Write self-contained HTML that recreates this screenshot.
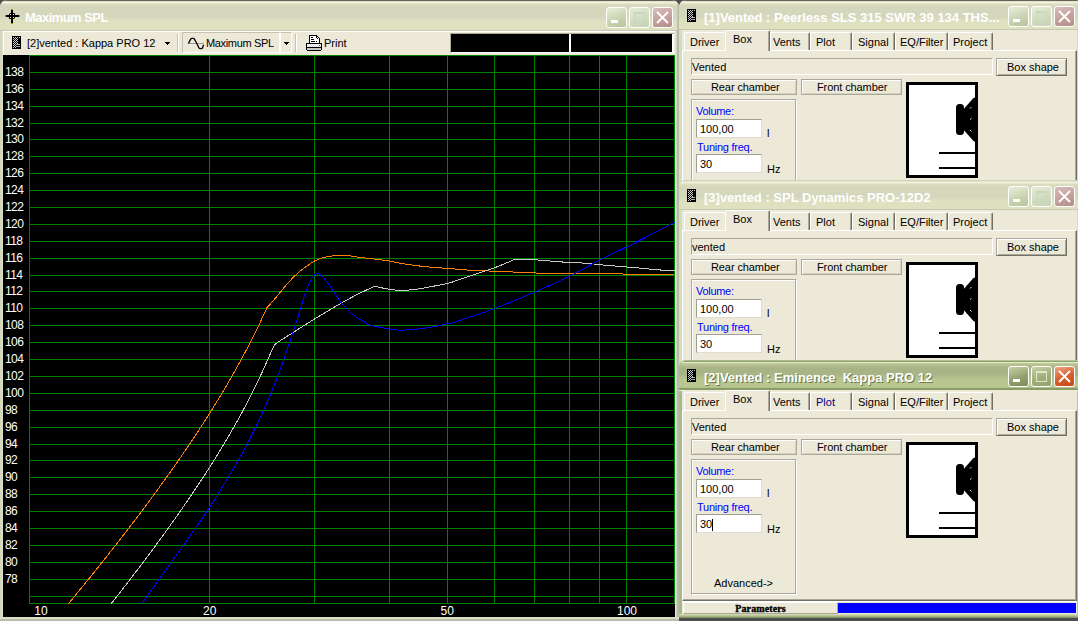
<!DOCTYPE html><html><head><meta charset="utf-8"><style>
*{margin:0;padding:0;box-sizing:border-box}
html,body{width:1078px;height:621px;overflow:hidden;background:#4e4e4e;font-family:"Liberation Sans",sans-serif;font-size:11px;color:#000}
.a{position:absolute}
.t{position:absolute;white-space:pre;line-height:13px}
.ttl{position:absolute;white-space:pre;font-weight:bold;color:#fff;line-height:16px}
.btn{position:absolute;width:21px;height:21px;border:1px solid #fff;border-radius:3px;overflow:hidden}
.pb{position:absolute;background:#ece9d8;border:1px solid #aca899;box-shadow:inset 1px 1px 0 #fff,inset -1px -1px 0 #d6d2c2}
.fld{position:absolute;background:#fff;border:1px solid;border-color:#a0a090 #e0ddd0 #e0ddd0 #a0a090}
</style></head><body><div class="a" style="left:0;top:0;width:679px;height:621px;background:linear-gradient(90deg,#d0d6bc 0,#d0d6bc 1px,#d6dac0 1px,#d6dac0 2px,#dcdec4 2px,#dcdec4 3px,#ece9d8 3px,#ece9d8 675px,#e6e6d4 675px,#e6e6d4 676px,#d0d4c0 676px,#d0d4c0 677px,#b4bca6 677px);border-radius:7px 7px 0 0"></div><div class="a" style="left:0;top:0;width:679px;height:31px;border-radius:7px 7px 0 0;background:linear-gradient(#65625a 0,#65625a 1px,#dfe2c5 1px,#dfe2c5 2px,#f1f1df 2px,#f1f1df 3px,#e6e4cb 3px,#e6e4cb 4px,#dcdcc0 4px,#d4d7bc 7px,#d4d7bc 17px,#dee0c0 21px,#dee0c0 30px,#c6c9b1 30px,#c6c9b1 31px)"></div><svg class="a" style="left:5px;top:9px" width="15" height="15" viewBox="0 0 15 15" shape-rendering="crispEdges"><rect x="6" y="1" width="2" height="13" fill="#000"/><rect x="1" y="6" width="13" height="2" fill="#000"/><rect x="6" y="0" width="2" height="1" fill="#a89400"/><rect x="6" y="14" width="2" height="1" fill="#a89400"/><rect x="0" y="6" width="1" height="2" fill="#a89400"/><rect x="14" y="6" width="1" height="2" fill="#a89400"/><rect x="4" y="4" width="6" height="6" fill="#000"/><rect x="5" y="5" width="1" height="1" fill="#fff"/><rect x="8" y="5" width="1" height="1" fill="#fff"/><rect x="5" y="8" width="1" height="1" fill="#fff"/><rect x="8" y="8" width="1" height="1" fill="#fff"/><rect x="4" y="4" width="1" height="1" fill="#a89400"/><rect x="9" y="9" width="1" height="1" fill="#a89400"/></svg><div class="ttl" style="left:25px;top:10px;font-size:13px;letter-spacing:-.55px">Maximum SPL</div><div class="btn" style="left:606px;top:7px;background:linear-gradient(160deg,#e8eed8,#cad4b2 55%,#b8c39e)"><div class="a" style="left:4px;top:12px;width:7px;height:3px;background:#fff"></div></div><div class="btn" style="left:629px;top:7px;background:linear-gradient(160deg,#e4ecd8,#d0dac0 60%,#c8d2b6)"><div class="a" style="left:4px;top:4px;width:11px;height:11px;border:1px solid rgba(200,214,184,.9);border-top-width:2px"></div></div><div class="btn" style="left:652px;top:7px;background:linear-gradient(160deg,#d8bcc0,#c4a09c 55%,#b48c88)"><svg class="a" style="left:3px;top:3px" width="13" height="13"><path d="M1 1L12 12M12 1L1 12" stroke="#fff" stroke-width="1.9"/></svg></div><div class="a" style="left:677px;top:4px;width:2px;height:27px;background:linear-gradient(90deg,#c4c8b0,#b4bca6)"></div><div class="a" style="left:3px;top:31px;width:672px;height:24px;background:#ece9d8;border-top:1px solid #fff;border-left:1px solid #fff"></div><svg class="a" style="left:12px;top:36px" width="9" height="13" shape-rendering="crispEdges"><rect x="0" y="0" width="9" height="13" fill="#000"/><rect x="1" y="1" width="1" height="1" fill="#d0d0d0"/><rect x="3" y="1" width="1" height="1" fill="#d0d0d0"/><rect x="5" y="1" width="1" height="1" fill="#d0d0d0"/><rect x="7" y="1" width="1" height="1" fill="#d0d0d0"/><rect x="2" y="2" width="1" height="1" fill="#d0d0d0"/><rect x="4" y="2" width="1" height="1" fill="#d0d0d0"/><rect x="1" y="3" width="1" height="1" fill="#d0d0d0"/><rect x="3" y="3" width="1" height="1" fill="#d0d0d0"/><rect x="5" y="3" width="1" height="1" fill="#d0d0d0"/><rect x="2" y="4" width="1" height="1" fill="#d0d0d0"/><rect x="4" y="4" width="1" height="1" fill="#d0d0d0"/><rect x="1" y="5" width="1" height="1" fill="#d0d0d0"/><rect x="3" y="5" width="1" height="1" fill="#d0d0d0"/><rect x="5" y="5" width="1" height="1" fill="#d0d0d0"/><rect x="2" y="6" width="1" height="1" fill="#d0d0d0"/><rect x="4" y="6" width="1" height="1" fill="#d0d0d0"/><rect x="1" y="7" width="1" height="1" fill="#d0d0d0"/><rect x="3" y="7" width="1" height="1" fill="#d0d0d0"/><rect x="5" y="7" width="1" height="1" fill="#d0d0d0"/><rect x="2" y="8" width="1" height="1" fill="#d0d0d0"/><rect x="4" y="8" width="1" height="1" fill="#d0d0d0"/><rect x="1" y="9" width="1" height="1" fill="#d0d0d0"/><rect x="3" y="9" width="1" height="1" fill="#d0d0d0"/><rect x="2" y="10" width="1" height="1" fill="#d0d0d0"/><rect x="1" y="11" width="1" height="1" fill="#d0d0d0"/><rect x="3" y="11" width="1" height="1" fill="#d0d0d0"/><rect x="4" y="8" width="4" height="1" fill="#b0b0b0"/><rect x="4" y="10" width="4" height="1" fill="#b0b0b0"/></svg><div class="t" style="left:27px;top:37px">[2]vented : Kappa PRO 12</div><svg class="a" style="left:165px;top:42px" width="5" height="3" shape-rendering="crispEdges"><rect x="0" y="0" width="5" height="1"/><rect x="1" y="1" width="3" height="1"/><rect x="2" y="2" width="1" height="1"/></svg><div class="a" style="left:177px;top:34px;width:2px;height:18px;border-left:1px solid #c5c2b2;border-right:1px solid #fff"></div><div class="a" style="left:182px;top:32px;width:98px;height:21px;border:1px solid #c5c2b2;border-right-color:#fff;border-bottom-color:#fff"></div><div class="a" style="left:280px;top:32px;width:12px;height:21px;border:1px solid #c5c2b2;border-left-color:#fff;border-right-color:#fff;border-bottom-color:#fff"></div><svg class="a" style="left:187px;top:37px" width="18" height="13"><path d="M2 6.5H17" stroke="#9a9a9a" stroke-width="1"/><path d="M1.4 6.6L3.6 2.2Q4.2 1.4 5 1.4H6.2Q7 1.4 7.6 2.4L10.3 7.5L11.8 10.6Q12.4 11.6 13.2 11.6H14.4Q15.2 11.6 15.7 10.6L16.6 7.8" stroke="#000" stroke-width="1.3" fill="none"/></svg><div class="t" style="left:206px;top:37px;letter-spacing:-.35px">Maximum SPL</div><svg class="a" style="left:284px;top:42px" width="5" height="3" shape-rendering="crispEdges"><rect x="0" y="0" width="5" height="1"/><rect x="1" y="1" width="3" height="1"/><rect x="2" y="2" width="1" height="1"/></svg><div class="a" style="left:295px;top:34px;width:2px;height:18px;border-left:1px solid #c5c2b2;border-right:1px solid #fff"></div><svg class="a" style="left:306px;top:35px" width="16" height="16" shape-rendering="crispEdges"><rect x="4" y="1" width="7" height="8" fill="#fff"/><rect x="11" y="2" width="1" height="7" fill="#fff"/><rect x="12" y="3" width="1" height="6" fill="#fff"/><rect x="3" y="0" width="8" height="1" fill="#000"/><rect x="11" y="1" width="1" height="1" fill="#000"/><rect x="12" y="2" width="1" height="1" fill="#000"/><rect x="13" y="3" width="1" height="6" fill="#000"/><rect x="3" y="0" width="1" height="9" fill="#000"/><rect x="10" y="1" width="1" height="2" fill="#000"/><rect x="11" y="3" width="1" height="1" fill="#000"/><rect x="5" y="2" width="2" height="1" fill="#000"/><rect x="5" y="4" width="3" height="1" fill="#000"/><rect x="5" y="6" width="4" height="1" fill="#000"/><rect x="10" y="6" width="1" height="1" fill="#000"/><rect x="0" y="8" width="16" height="1" fill="#000"/><rect x="0" y="8" width="1" height="7" fill="#000"/><rect x="15" y="8" width="1" height="7" fill="#000"/><rect x="1" y="9" width="14" height="1" fill="#d8d8d8"/><rect x="1" y="9" width="1" height="1" fill="#fff"/><rect x="3" y="9" width="1" height="1" fill="#fff"/><rect x="5" y="9" width="1" height="1" fill="#fff"/><rect x="7" y="9" width="1" height="1" fill="#fff"/><rect x="9" y="9" width="1" height="1" fill="#fff"/><rect x="11" y="9" width="1" height="1" fill="#fff"/><rect x="13" y="9" width="1" height="1" fill="#fff"/><rect x="1" y="10" width="14" height="1" fill="#d8d8d8"/><rect x="2" y="10" width="1" height="1" fill="#fff"/><rect x="4" y="10" width="1" height="1" fill="#fff"/><rect x="6" y="10" width="1" height="1" fill="#fff"/><rect x="8" y="10" width="1" height="1" fill="#fff"/><rect x="10" y="10" width="1" height="1" fill="#fff"/><rect x="12" y="10" width="1" height="1" fill="#fff"/><rect x="14" y="10" width="1" height="1" fill="#fff"/><rect x="1" y="11" width="14" height="1" fill="#d8d8d8"/><rect x="1" y="11" width="1" height="1" fill="#fff"/><rect x="3" y="11" width="1" height="1" fill="#fff"/><rect x="5" y="11" width="1" height="1" fill="#fff"/><rect x="7" y="11" width="1" height="1" fill="#fff"/><rect x="9" y="11" width="1" height="1" fill="#fff"/><rect x="11" y="11" width="1" height="1" fill="#fff"/><rect x="13" y="11" width="1" height="1" fill="#fff"/><rect x="13" y="10" width="1" height="1" fill="#ff0000"/><rect x="0" y="12" width="16" height="1" fill="#000"/><rect x="1" y="13" width="14" height="2" fill="#c8c8c8"/><rect x="1" y="15" width="14" height="1" fill="#000"/></svg><div class="t" style="left:324px;top:37px">Print</div><div class="a" style="left:450px;top:33px;width:224px;height:20px;background:#fff;border-top:1px solid #aca899;border-left:1px solid #aca899"></div><div class="a" style="left:451px;top:34px;width:118px;height:18px;background:#000"></div><div class="a" style="left:571px;top:34px;width:101px;height:18px;background:#000"></div><div class="a" style="left:3px;top:55px;width:672px;height:562px;background:#000"></div><div class="a" style="left:0;top:617px;width:679px;height:4px;background:linear-gradient(#dcdec6 0,#dcdec6 2px,#b9bca8 2px)"></div><svg class="a" style="left:0;top:0" width="1078" height="621"><defs><clipPath id="cp"><rect x="29" y="55" width="646" height="549"/></clipPath></defs><g fill="#008000" shape-rendering="crispEdges"><rect x="29" y="55" width="646" height="1"/><rect x="29" y="72" width="646" height="1"/><rect x="29" y="89" width="646" height="1"/><rect x="29" y="106" width="646" height="1"/><rect x="29" y="123" width="646" height="1"/><rect x="29" y="139" width="646" height="1"/><rect x="29" y="156" width="646" height="1"/><rect x="29" y="173" width="646" height="1"/><rect x="29" y="190" width="646" height="1"/><rect x="29" y="207" width="646" height="1"/><rect x="29" y="224" width="646" height="1"/><rect x="29" y="241" width="646" height="1"/><rect x="29" y="258" width="646" height="1"/><rect x="29" y="275" width="646" height="1"/><rect x="29" y="291" width="646" height="1"/><rect x="29" y="308" width="646" height="1"/><rect x="29" y="325" width="646" height="1"/><rect x="29" y="342" width="646" height="1"/><rect x="29" y="359" width="646" height="1"/><rect x="29" y="376" width="646" height="1"/><rect x="29" y="393" width="646" height="1"/><rect x="29" y="410" width="646" height="1"/><rect x="29" y="427" width="646" height="1"/><rect x="29" y="444" width="646" height="1"/><rect x="29" y="460" width="646" height="1"/><rect x="29" y="477" width="646" height="1"/><rect x="29" y="494" width="646" height="1"/><rect x="29" y="511" width="646" height="1"/><rect x="29" y="528" width="646" height="1"/><rect x="29" y="545" width="646" height="1"/><rect x="29" y="562" width="646" height="1"/><rect x="29" y="579" width="646" height="1"/><rect x="29" y="596" width="646" height="1"/><rect x="29" y="603" width="646" height="1"/><rect x="29" y="55" width="1" height="549"/><rect x="209" y="55" width="1" height="549"/><rect x="314" y="55" width="1" height="549"/><rect x="389" y="55" width="1" height="549"/><rect x="447" y="55" width="1" height="549"/><rect x="494" y="55" width="1" height="549"/><rect x="534" y="55" width="1" height="549"/><rect x="569" y="55" width="1" height="549"/><rect x="599" y="55" width="1" height="549"/><rect x="626" y="55" width="1" height="549"/><rect x="674" y="55" width="1" height="549"/></g><g clip-path="url(#cp)" shape-rendering="crispEdges"><path fill="none" stroke="#ff8000" stroke-width="1" d="M68.59,603.60 C69.57,602.40 71.21,600.43 74.51,596.40 C77.81,592.37 83.79,585.05 88.37,579.40 C92.94,573.75 97.44,568.15 101.94,562.50 C106.45,556.85 110.93,551.18 115.38,545.50 C119.83,539.82 124.27,534.10 128.64,528.40 C133.02,522.70 137.38,516.97 141.63,511.30 C145.89,505.63 150.05,500.03 154.18,494.40 C158.31,488.77 162.39,483.13 166.41,477.50 C170.43,471.87 174.48,466.12 178.31,460.60 C182.14,455.08 185.66,449.93 189.38,444.40 C193.10,438.87 196.95,433.05 200.62,427.40 C204.29,421.75 207.84,416.18 211.39,410.50 C214.94,404.82 218.86,398.38 221.92,393.30 C224.98,388.22 226.48,385.72 229.74,380.00 C233.01,374.28 238.20,365.03 241.50,359.00 C244.80,352.97 246.67,349.40 249.54,343.80 C252.41,338.20 255.81,331.42 258.71,325.40 C261.61,319.38 265.56,310.65 266.93,307.70"/><path fill="none" stroke="#ff8000" stroke-width="1" d="M266.93,307.70 C267.93,306.62 270.57,303.90 272.90,301.20 C275.23,298.50 278.35,294.58 280.90,291.50 C283.45,288.42 285.52,285.65 288.20,282.70 C290.88,279.75 294.18,276.35 297.00,273.80 C299.82,271.25 302.13,269.55 305.10,267.40 C308.07,265.25 311.58,262.57 314.80,260.90 C318.02,259.23 320.92,258.28 324.40,257.40 C327.88,256.52 331.93,255.90 335.70,255.60 C339.47,255.30 342.97,255.30 347.00,255.60 C351.03,255.90 356.07,256.92 359.90,257.40 C363.73,257.88 367.05,258.15 370.00,258.50 C372.95,258.85 374.37,259.07 377.60,259.50 C380.83,259.93 385.57,260.47 389.40,261.10 C393.23,261.73 396.18,262.55 400.60,263.30 C405.02,264.05 410.80,264.95 415.90,265.60 C421.00,266.25 425.93,266.73 431.20,267.20 C436.47,267.67 442.42,268.02 447.50,268.40 C452.58,268.78 457.95,269.20 461.70,269.50 C465.45,269.80 461.83,269.80 470.00,270.20 C478.17,270.60 498.35,271.38 510.70,271.90 C523.05,272.42 534.22,273.02 544.10,273.30 C553.98,273.58 561.35,273.52 570.00,273.60 C578.65,273.68 578.58,273.67 596.00,273.80 C613.42,273.93 661.42,274.30 674.50,274.40"/><path fill="none" stroke="#c8c8c8" stroke-width="1" d="M111.26,603.60 C112.20,602.40 113.77,600.43 116.91,596.40 C120.05,592.37 125.76,585.05 130.11,579.40 C134.45,573.75 138.72,568.15 142.98,562.50 C147.24,556.85 151.50,551.15 155.66,545.50 C159.83,539.85 163.88,534.30 167.97,528.60 C172.07,522.90 176.25,517.00 180.23,511.30 C184.20,505.60 188.03,500.03 191.83,494.40 C195.64,488.77 199.38,483.13 203.05,477.50 C206.71,471.87 210.39,466.12 213.84,460.60 C217.29,455.08 220.44,449.93 223.75,444.40 C227.06,438.87 230.46,433.05 233.68,427.40 C236.89,421.75 239.98,416.18 243.03,410.50 C246.08,404.82 249.11,399.00 251.98,393.30 C254.85,387.60 257.59,381.97 260.24,376.30 C262.89,370.63 265.62,364.28 267.88,359.30 C270.14,354.32 272.28,349.13 273.80,346.40 C275.32,343.67 273.88,345.15 277.00,342.90 C280.12,340.65 286.20,336.90 292.50,332.90 C298.80,328.90 306.80,323.78 314.80,318.90 C322.80,314.02 333.53,307.62 340.50,303.60 C347.47,299.58 350.93,297.68 356.60,294.80 C362.27,291.92 371.52,287.72 374.50,286.30"/><path fill="none" stroke="#c8c8c8" stroke-width="1" d="M374.50,286.30 C376.98,286.80 384.80,288.62 389.40,289.30 C394.00,289.98 397.68,290.40 402.10,290.40 C406.52,290.40 411.05,289.93 415.90,289.30 C420.75,288.67 425.93,287.57 431.20,286.60 C436.47,285.63 442.70,284.70 447.50,283.50 C452.30,282.30 456.25,280.65 460.00,279.40 C463.75,278.15 464.25,277.93 470.00,276.00 C475.75,274.07 486.98,270.58 494.50,267.80 C502.02,265.02 511.67,260.72 515.10,259.30"/><path fill="none" stroke="#c8c8c8" stroke-width="1" d="M515.10,259.30 C518.72,259.40 530.28,259.55 536.80,259.90 C543.32,260.25 548.67,260.97 554.20,261.40 C559.73,261.83 565.38,262.23 570.00,262.50 C574.62,262.77 577.77,262.73 581.90,263.00 C586.03,263.27 590.62,263.70 594.80,264.10 C598.98,264.50 602.93,265.03 607.00,265.40 C611.07,265.77 615.23,265.98 619.20,266.30 C623.17,266.62 626.93,266.97 630.80,267.30 C634.67,267.63 638.53,267.93 642.40,268.30 C646.27,268.67 650.13,269.17 654.00,269.50 C657.87,269.83 662.18,270.17 665.60,270.30 C669.02,270.43 673.02,270.30 674.50,270.30"/><path fill="none" stroke="#0000ff" stroke-width="1" d="M141.79,603.60 C142.64,602.40 144.00,600.43 146.87,596.40 C149.74,592.37 154.94,585.10 159.02,579.40 C163.11,573.70 167.31,567.90 171.39,562.20 C175.48,556.50 179.57,550.80 183.52,545.20 C187.48,539.60 190.98,534.65 195.13,528.60 C199.28,522.55 204.32,515.13 208.45,508.90 C212.57,502.67 214.86,499.35 219.86,491.20 C224.87,483.05 233.95,467.80 238.46,460.00 C242.98,452.20 244.11,449.83 246.96,444.40 C249.81,438.97 253.40,431.80 255.58,427.40 C257.77,423.00 257.98,422.57 260.07,418.00 C262.16,413.43 266.31,404.10 268.11,400.00 C269.91,395.90 269.29,397.35 270.89,393.40 C272.48,389.45 275.51,381.98 277.68,376.30 C279.85,370.62 281.92,364.93 283.92,359.30 C285.92,353.67 287.79,348.15 289.67,342.50 C291.55,336.85 294.01,329.15 295.22,325.40 C296.43,321.65 296.16,322.42 296.92,320.00 C297.68,317.58 298.38,315.37 299.78,310.90 C301.18,306.43 303.63,298.03 305.32,293.20 C307.00,288.37 308.32,285.00 309.90,281.90 C311.48,278.80 313.58,275.90 314.80,274.60 C316.02,273.30 316.40,274.15 317.20,274.10 C318.00,274.05 318.40,273.53 319.60,274.30 C320.80,275.07 322.25,276.10 324.40,278.70 C326.55,281.30 329.82,286.02 332.50,289.90 C335.18,293.78 337.82,298.50 340.50,302.00 C343.18,305.50 345.92,308.35 348.60,310.90 C351.28,313.45 353.65,315.28 356.60,317.30 C359.55,319.32 364.07,321.72 366.30,323.00 C368.53,324.28 366.15,323.98 370.00,325.00 C373.85,326.02 384.05,328.23 389.40,329.10 C394.75,329.97 397.68,330.20 402.10,330.20 C406.52,330.20 411.05,329.62 415.90,329.10 C420.75,328.58 425.93,328.00 431.20,327.10 C436.47,326.20 442.70,324.82 447.50,323.70 C452.30,322.58 452.17,322.95 460.00,320.40 C467.83,317.85 482.07,313.10 494.50,308.40 C506.93,303.70 522.02,297.62 534.60,292.20 C547.18,286.78 559.18,281.23 570.00,275.90 C580.82,270.57 589.95,265.07 599.50,260.20 C609.05,255.33 618.87,250.88 627.30,246.70 C635.73,242.52 642.23,239.18 650.10,235.10 C657.97,231.02 670.43,224.35 674.50,222.20"/></g></svg><div class="t" style="left:5px;top:65px;color:#fff;font-size:12px;line-height:14px;letter-spacing:-.6px">138</div><div class="t" style="left:5px;top:82px;color:#fff;font-size:12px;line-height:14px;letter-spacing:-.6px">136</div><div class="t" style="left:5px;top:99px;color:#fff;font-size:12px;line-height:14px;letter-spacing:-.6px">134</div><div class="t" style="left:5px;top:116px;color:#fff;font-size:12px;line-height:14px;letter-spacing:-.6px">132</div><div class="t" style="left:5px;top:132px;color:#fff;font-size:12px;line-height:14px;letter-spacing:-.6px">130</div><div class="t" style="left:5px;top:149px;color:#fff;font-size:12px;line-height:14px;letter-spacing:-.6px">128</div><div class="t" style="left:5px;top:166px;color:#fff;font-size:12px;line-height:14px;letter-spacing:-.6px">126</div><div class="t" style="left:5px;top:183px;color:#fff;font-size:12px;line-height:14px;letter-spacing:-.6px">124</div><div class="t" style="left:5px;top:200px;color:#fff;font-size:12px;line-height:14px;letter-spacing:-.6px">122</div><div class="t" style="left:5px;top:217px;color:#fff;font-size:12px;line-height:14px;letter-spacing:-.6px">120</div><div class="t" style="left:5px;top:234px;color:#fff;font-size:12px;line-height:14px;letter-spacing:-.6px">118</div><div class="t" style="left:5px;top:251px;color:#fff;font-size:12px;line-height:14px;letter-spacing:-.6px">116</div><div class="t" style="left:5px;top:268px;color:#fff;font-size:12px;line-height:14px;letter-spacing:-.6px">114</div><div class="t" style="left:5px;top:284px;color:#fff;font-size:12px;line-height:14px;letter-spacing:-.6px">112</div><div class="t" style="left:5px;top:301px;color:#fff;font-size:12px;line-height:14px;letter-spacing:-.6px">110</div><div class="t" style="left:5px;top:318px;color:#fff;font-size:12px;line-height:14px;letter-spacing:-.6px">108</div><div class="t" style="left:5px;top:335px;color:#fff;font-size:12px;line-height:14px;letter-spacing:-.6px">106</div><div class="t" style="left:5px;top:352px;color:#fff;font-size:12px;line-height:14px;letter-spacing:-.6px">104</div><div class="t" style="left:5px;top:369px;color:#fff;font-size:12px;line-height:14px;letter-spacing:-.6px">102</div><div class="t" style="left:5px;top:386px;color:#fff;font-size:12px;line-height:14px;letter-spacing:-.6px">100</div><div class="t" style="left:5px;top:403px;color:#fff;font-size:12px;line-height:14px;letter-spacing:-.6px">98</div><div class="t" style="left:5px;top:420px;color:#fff;font-size:12px;line-height:14px;letter-spacing:-.6px">96</div><div class="t" style="left:5px;top:437px;color:#fff;font-size:12px;line-height:14px;letter-spacing:-.6px">94</div><div class="t" style="left:5px;top:453px;color:#fff;font-size:12px;line-height:14px;letter-spacing:-.6px">92</div><div class="t" style="left:5px;top:470px;color:#fff;font-size:12px;line-height:14px;letter-spacing:-.6px">90</div><div class="t" style="left:5px;top:487px;color:#fff;font-size:12px;line-height:14px;letter-spacing:-.6px">88</div><div class="t" style="left:5px;top:504px;color:#fff;font-size:12px;line-height:14px;letter-spacing:-.6px">86</div><div class="t" style="left:5px;top:521px;color:#fff;font-size:12px;line-height:14px;letter-spacing:-.6px">84</div><div class="t" style="left:5px;top:538px;color:#fff;font-size:12px;line-height:14px;letter-spacing:-.6px">82</div><div class="t" style="left:5px;top:555px;color:#fff;font-size:12px;line-height:14px;letter-spacing:-.6px">80</div><div class="t" style="left:5px;top:572px;color:#fff;font-size:12px;line-height:14px;letter-spacing:-.6px">78</div><div class="t" style="left:0.9px;width:80px;text-align:center;top:604px;color:#fff;font-size:12px;line-height:14px">10</div><div class="t" style="left:169.7px;width:80px;text-align:center;top:604px;color:#fff;font-size:12px;line-height:14px">20</div><div class="t" style="left:407.3px;width:80px;text-align:center;top:604px;color:#fff;font-size:12px;line-height:14px">50</div><div class="t" style="left:587.0px;width:80px;text-align:center;top:604px;color:#fff;font-size:12px;line-height:14px">100</div><div class="a" style="left:679px;top:0px;width:399px;height:196px;background:#d6dcc0;border-radius:7px 2px 0 0"></div><div class="a" style="left:679px;top:0px;width:399px;height:30px;border-radius:7px 2px 0 0;background:linear-gradient(#65625a 0,#65625a 1px,#dfe2c5 1px,#dfe2c5 2px,#f1f1df 2px,#f1f1df 3px,#e6e4cb 3px,#e6e4cb 4px,#dcdcc0 4px,#d4d7bc 7px,#d4d7bc 17px,#dee0c0 21px,#dee0c0 29px,#c6c9b1 29px,#c6c9b1 30px)"></div><svg class="a" style="left:687px;top:9px" width="9" height="13" shape-rendering="crispEdges"><rect x="0" y="0" width="9" height="13" fill="#000"/><rect x="1" y="1" width="1" height="1" fill="#d0d0d0"/><rect x="3" y="1" width="1" height="1" fill="#d0d0d0"/><rect x="5" y="1" width="1" height="1" fill="#d0d0d0"/><rect x="7" y="1" width="1" height="1" fill="#d0d0d0"/><rect x="2" y="2" width="1" height="1" fill="#d0d0d0"/><rect x="4" y="2" width="1" height="1" fill="#d0d0d0"/><rect x="1" y="3" width="1" height="1" fill="#d0d0d0"/><rect x="3" y="3" width="1" height="1" fill="#d0d0d0"/><rect x="5" y="3" width="1" height="1" fill="#d0d0d0"/><rect x="2" y="4" width="1" height="1" fill="#d0d0d0"/><rect x="4" y="4" width="1" height="1" fill="#d0d0d0"/><rect x="1" y="5" width="1" height="1" fill="#d0d0d0"/><rect x="3" y="5" width="1" height="1" fill="#d0d0d0"/><rect x="5" y="5" width="1" height="1" fill="#d0d0d0"/><rect x="2" y="6" width="1" height="1" fill="#d0d0d0"/><rect x="4" y="6" width="1" height="1" fill="#d0d0d0"/><rect x="1" y="7" width="1" height="1" fill="#d0d0d0"/><rect x="3" y="7" width="1" height="1" fill="#d0d0d0"/><rect x="5" y="7" width="1" height="1" fill="#d0d0d0"/><rect x="2" y="8" width="1" height="1" fill="#d0d0d0"/><rect x="4" y="8" width="1" height="1" fill="#d0d0d0"/><rect x="1" y="9" width="1" height="1" fill="#d0d0d0"/><rect x="3" y="9" width="1" height="1" fill="#d0d0d0"/><rect x="2" y="10" width="1" height="1" fill="#d0d0d0"/><rect x="1" y="11" width="1" height="1" fill="#d0d0d0"/><rect x="3" y="11" width="1" height="1" fill="#d0d0d0"/><rect x="4" y="8" width="4" height="1" fill="#b0b0b0"/><rect x="4" y="10" width="4" height="1" fill="#b0b0b0"/></svg><div class="ttl" style="left:704px;top:10px;font-size:13px;">[1]Vented : Peerless SLS 315 SWR 39 134 THS...</div><div class="btn" style="left:1008px;top:6px;background:linear-gradient(160deg,#e8eed8,#cad4b2 55%,#b8c39e)"><div class="a" style="left:4px;top:12px;width:7px;height:3px;background:#fff"></div></div><div class="btn" style="left:1031px;top:6px;background:linear-gradient(160deg,#e4ecd8,#d0dac0 60%,#c8d2b6)"><div class="a" style="left:4px;top:4px;width:11px;height:11px;border:1px solid rgba(200,214,184,.9);border-top-width:2px"></div></div><div class="btn" style="left:1054px;top:6px;background:linear-gradient(160deg,#d8bcc0,#c4a09c 55%,#b48c88)"><svg class="a" style="left:3px;top:3px" width="13" height="13"><path d="M1 1L12 12M12 1L1 12" stroke="#fff" stroke-width="1.9"/></svg></div><div class="a" style="left:682px;top:30px;width:395px;height:161px;background:#ece9d8"></div><div class="a" style="left:682px;top:50px;width:395px;height:131px;border-top:1px solid #fff;border-left:1px solid #fff;border-right:1px solid #716f64;box-shadow:inset -1px 0 0 #aca899;"></div><div class="a" style="left:684px;top:32px;width:41px;height:18px;background:#ece9d8;border-top:1px solid #fff;border-left:1px solid #fff;border-radius:2px 2px 0 0"></div><div class="t" style="left:690px;top:36px;color:#000">Driver</div><div class="a" style="left:725px;top:30px;width:45px;height:21px;background:#ece9d8;border-top:1px solid #fff;border-left:1px solid #fff;border-right:1px solid #716f64;box-shadow:inset -1px 0 0 #aca899;border-radius:2px 2px 0 0"></div><div class="t" style="left:733px;top:33px;color:#000">Box</div><div class="a" style="left:770px;top:32px;width:40px;height:18px;background:#ece9d8;border-top:1px solid #fff;border-left:1px solid #fff;border-right:1px solid #716f64;box-shadow:inset -1px 0 0 #aca899;border-radius:2px 2px 0 0"></div><div class="t" style="left:773px;top:36px;color:#000">Vents</div><div class="a" style="left:810px;top:32px;width:42px;height:18px;background:#ece9d8;border-top:1px solid #fff;border-left:1px solid #fff;border-right:1px solid #716f64;box-shadow:inset -1px 0 0 #aca899;border-radius:2px 2px 0 0"></div><div class="t" style="left:816px;top:36px;color:#000">Plot</div><div class="a" style="left:852px;top:32px;width:43px;height:18px;background:#ece9d8;border-top:1px solid #fff;border-left:1px solid #fff;border-right:1px solid #716f64;box-shadow:inset -1px 0 0 #aca899;border-radius:2px 2px 0 0"></div><div class="t" style="left:858px;top:36px;color:#000">Signal</div><div class="a" style="left:895px;top:32px;width:53px;height:18px;background:#ece9d8;border-top:1px solid #fff;border-left:1px solid #fff;border-right:1px solid #716f64;box-shadow:inset -1px 0 0 #aca899;border-radius:2px 2px 0 0"></div><div class="t" style="left:900px;top:36px;color:#000">EQ/Filter</div><div class="a" style="left:948px;top:32px;width:45px;height:18px;background:#ece9d8;border-top:1px solid #fff;border-left:1px solid #fff;border-right:1px solid #716f64;box-shadow:inset -1px 0 0 #aca899;border-radius:2px 2px 0 0"></div><div class="t" style="left:953px;top:36px;color:#000">Project</div><div class="a" style="left:691px;top:58px;width:302px;height:17px;border-top:1px solid #aca899;border-left:1px solid #aca899;border-bottom:1px solid #fff;border-right:1px solid #fff"></div><div class="t" style="left:692px;top:61px">Vented</div><div class="a" style="left:996px;top:58px;width:71px;height:18px;background:#ece9d8;border:1px solid;border-color:#aca899 #716f64 #716f64 #aca899;box-shadow:inset 1px 1px 0 #fff,inset -1px -1px 0 #aca899"></div><div class="t" style="left:1007px;top:61px">Box shape</div><div class="pb" style="left:691px;top:79px;width:106px;height:16px"></div><div class="t" style="left:711px;top:81px;letter-spacing:-.1px">Rear chamber</div><div class="pb" style="left:801px;top:79px;width:101px;height:16px"></div><div class="t" style="left:817px;top:81px;letter-spacing:-.1px">Front chamber</div><div class="a" style="left:691px;top:99px;width:106px;height:90px;border:1px solid #aca899;border-right-color:#fff;border-bottom-color:#fff;box-shadow:inset -1px -1px 0 #aca899,inset 1px 1px 0 #fff"></div><div class="t" style="left:696px;top:105px;color:#0000ff;letter-spacing:-.3px">Volume:</div><div class="fld" style="left:696px;top:119px;width:66px;height:19px"></div><div class="t" style="left:700px;top:123px">100,00</div><div class="t" style="left:767px;top:127px">l</div><div class="t" style="left:697px;top:141px;color:#0000ff;letter-spacing:-.25px">Tuning freq.</div><div class="fld" style="left:696px;top:154px;width:66px;height:19px"></div><div class="t" style="left:700px;top:158px">30</div><div class="t" style="left:767px;top:163px">Hz</div><svg class="a" style="left:906px;top:82px" width="72" height="96" shape-rendering="crispEdges"><rect x="1.5" y="1.5" width="69" height="93" fill="#fff" stroke="#000" stroke-width="3"/><rect x="33" y="70" width="36" height="2" fill="#000"/><rect x="33" y="85" width="36" height="2" fill="#000"/></svg><svg class="a" style="left:906px;top:82px" width="72" height="96"><rect x="50" y="22" width="8" height="31" rx="3.5" fill="#000"/><path d="M56 29 L67 16.5 Q69 15 70 15 L70 60 Q69 60 67 58.5 L56 46 Z" fill="#000"/><path d="M64 26.5l1.5-1.5M64 37.5l1.5-1M64 48l1.5 1.5" stroke="#ddd" stroke-width="1"/></svg><div class="a" style="left:679px;top:180px;width:399px;height:196px;background:#d6dcc0;border-radius:7px 2px 0 0"></div><div class="a" style="left:679px;top:180px;width:399px;height:30px;border-radius:7px 2px 0 0;background:linear-gradient(#d2d6ba 0,#d2d6ba 1px,#dfe2c5 1px,#dfe2c5 2px,#f1f1df 2px,#f1f1df 3px,#e6e4cb 3px,#e6e4cb 4px,#dcdcc0 4px,#d4d7bc 7px,#d4d7bc 17px,#dee0c0 21px,#dee0c0 29px,#c6c9b1 29px,#c6c9b1 30px)"></div><svg class="a" style="left:687px;top:189px" width="9" height="13" shape-rendering="crispEdges"><rect x="0" y="0" width="9" height="13" fill="#000"/><rect x="1" y="1" width="1" height="1" fill="#d0d0d0"/><rect x="3" y="1" width="1" height="1" fill="#d0d0d0"/><rect x="5" y="1" width="1" height="1" fill="#d0d0d0"/><rect x="7" y="1" width="1" height="1" fill="#d0d0d0"/><rect x="2" y="2" width="1" height="1" fill="#d0d0d0"/><rect x="4" y="2" width="1" height="1" fill="#d0d0d0"/><rect x="1" y="3" width="1" height="1" fill="#d0d0d0"/><rect x="3" y="3" width="1" height="1" fill="#d0d0d0"/><rect x="5" y="3" width="1" height="1" fill="#d0d0d0"/><rect x="2" y="4" width="1" height="1" fill="#d0d0d0"/><rect x="4" y="4" width="1" height="1" fill="#d0d0d0"/><rect x="1" y="5" width="1" height="1" fill="#d0d0d0"/><rect x="3" y="5" width="1" height="1" fill="#d0d0d0"/><rect x="5" y="5" width="1" height="1" fill="#d0d0d0"/><rect x="2" y="6" width="1" height="1" fill="#d0d0d0"/><rect x="4" y="6" width="1" height="1" fill="#d0d0d0"/><rect x="1" y="7" width="1" height="1" fill="#d0d0d0"/><rect x="3" y="7" width="1" height="1" fill="#d0d0d0"/><rect x="5" y="7" width="1" height="1" fill="#d0d0d0"/><rect x="2" y="8" width="1" height="1" fill="#d0d0d0"/><rect x="4" y="8" width="1" height="1" fill="#d0d0d0"/><rect x="1" y="9" width="1" height="1" fill="#d0d0d0"/><rect x="3" y="9" width="1" height="1" fill="#d0d0d0"/><rect x="2" y="10" width="1" height="1" fill="#d0d0d0"/><rect x="1" y="11" width="1" height="1" fill="#d0d0d0"/><rect x="3" y="11" width="1" height="1" fill="#d0d0d0"/><rect x="4" y="8" width="4" height="1" fill="#b0b0b0"/><rect x="4" y="10" width="4" height="1" fill="#b0b0b0"/></svg><div class="ttl" style="left:704px;top:190px;font-size:13px;">[3]vented : SPL Dynamics PRO-12D2</div><div class="btn" style="left:1008px;top:186px;background:linear-gradient(160deg,#e8eed8,#cad4b2 55%,#b8c39e)"><div class="a" style="left:4px;top:12px;width:7px;height:3px;background:#fff"></div></div><div class="btn" style="left:1031px;top:186px;background:linear-gradient(160deg,#e4ecd8,#d0dac0 60%,#c8d2b6)"><div class="a" style="left:4px;top:4px;width:11px;height:11px;border:1px solid rgba(200,214,184,.9);border-top-width:2px"></div></div><div class="btn" style="left:1054px;top:186px;background:linear-gradient(160deg,#d8bcc0,#c4a09c 55%,#b48c88)"><svg class="a" style="left:3px;top:3px" width="13" height="13"><path d="M1 1L12 12M12 1L1 12" stroke="#fff" stroke-width="1.9"/></svg></div><div class="a" style="left:682px;top:210px;width:395px;height:161px;background:#ece9d8"></div><div class="a" style="left:682px;top:230px;width:395px;height:131px;border-top:1px solid #fff;border-left:1px solid #fff;border-right:1px solid #716f64;box-shadow:inset -1px 0 0 #aca899;"></div><div class="a" style="left:684px;top:212px;width:41px;height:18px;background:#ece9d8;border-top:1px solid #fff;border-left:1px solid #fff;border-radius:2px 2px 0 0"></div><div class="t" style="left:690px;top:216px;color:#000">Driver</div><div class="a" style="left:725px;top:210px;width:45px;height:21px;background:#ece9d8;border-top:1px solid #fff;border-left:1px solid #fff;border-right:1px solid #716f64;box-shadow:inset -1px 0 0 #aca899;border-radius:2px 2px 0 0"></div><div class="t" style="left:733px;top:213px;color:#000">Box</div><div class="a" style="left:770px;top:212px;width:40px;height:18px;background:#ece9d8;border-top:1px solid #fff;border-left:1px solid #fff;border-right:1px solid #716f64;box-shadow:inset -1px 0 0 #aca899;border-radius:2px 2px 0 0"></div><div class="t" style="left:773px;top:216px;color:#000">Vents</div><div class="a" style="left:810px;top:212px;width:42px;height:18px;background:#ece9d8;border-top:1px solid #fff;border-left:1px solid #fff;border-right:1px solid #716f64;box-shadow:inset -1px 0 0 #aca899;border-radius:2px 2px 0 0"></div><div class="t" style="left:816px;top:216px;color:#000">Plot</div><div class="a" style="left:852px;top:212px;width:43px;height:18px;background:#ece9d8;border-top:1px solid #fff;border-left:1px solid #fff;border-right:1px solid #716f64;box-shadow:inset -1px 0 0 #aca899;border-radius:2px 2px 0 0"></div><div class="t" style="left:858px;top:216px;color:#000">Signal</div><div class="a" style="left:895px;top:212px;width:53px;height:18px;background:#ece9d8;border-top:1px solid #fff;border-left:1px solid #fff;border-right:1px solid #716f64;box-shadow:inset -1px 0 0 #aca899;border-radius:2px 2px 0 0"></div><div class="t" style="left:900px;top:216px;color:#000">EQ/Filter</div><div class="a" style="left:948px;top:212px;width:45px;height:18px;background:#ece9d8;border-top:1px solid #fff;border-left:1px solid #fff;border-right:1px solid #716f64;box-shadow:inset -1px 0 0 #aca899;border-radius:2px 2px 0 0"></div><div class="t" style="left:953px;top:216px;color:#000">Project</div><div class="a" style="left:691px;top:238px;width:302px;height:17px;border-top:1px solid #aca899;border-left:1px solid #aca899;border-bottom:1px solid #fff;border-right:1px solid #fff"></div><div class="t" style="left:692px;top:241px">vented</div><div class="a" style="left:996px;top:238px;width:71px;height:18px;background:#ece9d8;border:1px solid;border-color:#aca899 #716f64 #716f64 #aca899;box-shadow:inset 1px 1px 0 #fff,inset -1px -1px 0 #aca899"></div><div class="t" style="left:1007px;top:241px">Box shape</div><div class="pb" style="left:691px;top:259px;width:106px;height:16px"></div><div class="t" style="left:711px;top:261px;letter-spacing:-.1px">Rear chamber</div><div class="pb" style="left:801px;top:259px;width:101px;height:16px"></div><div class="t" style="left:817px;top:261px;letter-spacing:-.1px">Front chamber</div><div class="a" style="left:691px;top:279px;width:106px;height:90px;border:1px solid #aca899;border-right-color:#fff;border-bottom-color:#fff;box-shadow:inset -1px -1px 0 #aca899,inset 1px 1px 0 #fff"></div><div class="t" style="left:696px;top:285px;color:#0000ff;letter-spacing:-.3px">Volume:</div><div class="fld" style="left:696px;top:299px;width:66px;height:19px"></div><div class="t" style="left:700px;top:303px">100,00</div><div class="t" style="left:767px;top:307px">l</div><div class="t" style="left:697px;top:321px;color:#0000ff;letter-spacing:-.25px">Tuning freq.</div><div class="fld" style="left:696px;top:334px;width:66px;height:19px"></div><div class="t" style="left:700px;top:338px">30</div><div class="t" style="left:767px;top:343px">Hz</div><svg class="a" style="left:906px;top:262px" width="72" height="96" shape-rendering="crispEdges"><rect x="1.5" y="1.5" width="69" height="93" fill="#fff" stroke="#000" stroke-width="3"/><rect x="33" y="70" width="36" height="2" fill="#000"/><rect x="33" y="85" width="36" height="2" fill="#000"/></svg><svg class="a" style="left:906px;top:262px" width="72" height="96"><rect x="50" y="22" width="8" height="31" rx="3.5" fill="#000"/><path d="M56 29 L67 16.5 Q69 15 70 15 L70 60 Q69 60 67 58.5 L56 46 Z" fill="#000"/><path d="M64 26.5l1.5-1.5M64 37.5l1.5-1M64 48l1.5 1.5" stroke="#ddd" stroke-width="1"/></svg><div class="a" style="left:679px;top:360px;width:399px;height:261px;background:linear-gradient(90deg,#a9b88a,#b8c496);border-radius:7px 2px 0 0"></div><div class="a" style="left:679px;top:361px;width:399px;height:30px;border-radius:7px 2px 0 0;background:linear-gradient(#8aa070 0,#8aa070 1px,#e4ecc4 1px,#e4ecc4 2px,#c2cb9c 2px,#b5c090 4px,#a8b485 7px,#a8b485 13px,#bac690 19px,#bac690 26px,#b4c08a 26px,#b4c08a 27px,#8a9c68 27px,#8a9c68 29px,#f0eee0 29px,#f0eee0 30px)"></div><svg class="a" style="left:687px;top:369px" width="9" height="13" shape-rendering="crispEdges"><rect x="0" y="0" width="9" height="13" fill="#000"/><rect x="1" y="1" width="1" height="1" fill="#d0d0d0"/><rect x="3" y="1" width="1" height="1" fill="#d0d0d0"/><rect x="5" y="1" width="1" height="1" fill="#d0d0d0"/><rect x="7" y="1" width="1" height="1" fill="#d0d0d0"/><rect x="2" y="2" width="1" height="1" fill="#d0d0d0"/><rect x="4" y="2" width="1" height="1" fill="#d0d0d0"/><rect x="1" y="3" width="1" height="1" fill="#d0d0d0"/><rect x="3" y="3" width="1" height="1" fill="#d0d0d0"/><rect x="5" y="3" width="1" height="1" fill="#d0d0d0"/><rect x="2" y="4" width="1" height="1" fill="#d0d0d0"/><rect x="4" y="4" width="1" height="1" fill="#d0d0d0"/><rect x="1" y="5" width="1" height="1" fill="#d0d0d0"/><rect x="3" y="5" width="1" height="1" fill="#d0d0d0"/><rect x="5" y="5" width="1" height="1" fill="#d0d0d0"/><rect x="2" y="6" width="1" height="1" fill="#d0d0d0"/><rect x="4" y="6" width="1" height="1" fill="#d0d0d0"/><rect x="1" y="7" width="1" height="1" fill="#d0d0d0"/><rect x="3" y="7" width="1" height="1" fill="#d0d0d0"/><rect x="5" y="7" width="1" height="1" fill="#d0d0d0"/><rect x="2" y="8" width="1" height="1" fill="#d0d0d0"/><rect x="4" y="8" width="1" height="1" fill="#d0d0d0"/><rect x="1" y="9" width="1" height="1" fill="#d0d0d0"/><rect x="3" y="9" width="1" height="1" fill="#d0d0d0"/><rect x="2" y="10" width="1" height="1" fill="#d0d0d0"/><rect x="1" y="11" width="1" height="1" fill="#d0d0d0"/><rect x="3" y="11" width="1" height="1" fill="#d0d0d0"/><rect x="4" y="8" width="4" height="1" fill="#b0b0b0"/><rect x="4" y="10" width="4" height="1" fill="#b0b0b0"/></svg><div class="ttl" style="left:704px;top:370px;font-size:13px;text-shadow:1px 1px 0 #6a7a48;">[2]Vented : Eminence&nbsp; Kappa PRO 12</div><div class="btn" style="left:1008px;top:366px;background:linear-gradient(160deg,#c6d0a8,#93a26c 55%,#7d8c58)"><div class="a" style="left:4px;top:12px;width:7px;height:3px;background:#fff"></div></div><div class="btn" style="left:1031px;top:366px;background:linear-gradient(160deg,#c6d0a8,#a0ae7a 55%,#94a270)"><div class="a" style="left:4px;top:4px;width:11px;height:11px;border:1px solid rgba(230,240,210,.85);border-top-width:2px"></div></div><div class="btn" style="left:1054px;top:366px;background:linear-gradient(160deg,#eaa888,#d8602e 50%,#c44a18)"><svg class="a" style="left:3px;top:3px" width="13" height="13"><path d="M1 1L12 12M12 1L1 12" stroke="#fff" stroke-width="1.9"/></svg></div><div class="a" style="left:682px;top:390px;width:395px;height:224px;background:#ece9d8"></div><div class="a" style="left:682px;top:410px;width:395px;height:191px;border-top:1px solid #fff;border-left:1px solid #fff;border-right:1px solid #716f64;border-bottom:1px solid #716f64;box-shadow:inset -1px -1px 0 #aca899;"></div><div class="a" style="left:684px;top:392px;width:41px;height:18px;background:#ece9d8;border-top:1px solid #fff;border-left:1px solid #fff;border-radius:2px 2px 0 0"></div><div class="t" style="left:690px;top:396px;color:#000">Driver</div><div class="a" style="left:725px;top:390px;width:45px;height:21px;background:#ece9d8;border-top:1px solid #fff;border-left:1px solid #fff;border-right:1px solid #716f64;box-shadow:inset -1px 0 0 #aca899;border-radius:2px 2px 0 0"></div><div class="t" style="left:733px;top:393px;color:#000">Box</div><div class="a" style="left:770px;top:392px;width:40px;height:18px;background:#ece9d8;border-top:1px solid #fff;border-left:1px solid #fff;border-right:1px solid #716f64;box-shadow:inset -1px 0 0 #aca899;border-radius:2px 2px 0 0"></div><div class="t" style="left:773px;top:396px;color:#000">Vents</div><div class="a" style="left:810px;top:392px;width:42px;height:18px;background:#ece9d8;border-top:1px solid #fff;border-left:1px solid #fff;border-right:1px solid #716f64;box-shadow:inset -1px 0 0 #aca899;border-radius:2px 2px 0 0"></div><div class="t" style="left:816px;top:396px;color:#000080">Plot</div><div class="a" style="left:852px;top:392px;width:43px;height:18px;background:#ece9d8;border-top:1px solid #fff;border-left:1px solid #fff;border-right:1px solid #716f64;box-shadow:inset -1px 0 0 #aca899;border-radius:2px 2px 0 0"></div><div class="t" style="left:858px;top:396px;color:#000">Signal</div><div class="a" style="left:895px;top:392px;width:53px;height:18px;background:#ece9d8;border-top:1px solid #fff;border-left:1px solid #fff;border-right:1px solid #716f64;box-shadow:inset -1px 0 0 #aca899;border-radius:2px 2px 0 0"></div><div class="t" style="left:900px;top:396px;color:#000">EQ/Filter</div><div class="a" style="left:948px;top:392px;width:45px;height:18px;background:#ece9d8;border-top:1px solid #fff;border-left:1px solid #fff;border-right:1px solid #716f64;box-shadow:inset -1px 0 0 #aca899;border-radius:2px 2px 0 0"></div><div class="t" style="left:953px;top:396px;color:#000">Project</div><div class="a" style="left:691px;top:418px;width:302px;height:17px;border-top:1px solid #aca899;border-left:1px solid #aca899;border-bottom:1px solid #fff;border-right:1px solid #fff"></div><div class="t" style="left:692px;top:421px">Vented</div><div class="a" style="left:996px;top:418px;width:71px;height:18px;background:#ece9d8;border:1px solid;border-color:#aca899 #716f64 #716f64 #aca899;box-shadow:inset 1px 1px 0 #fff,inset -1px -1px 0 #aca899"></div><div class="t" style="left:1007px;top:421px">Box shape</div><div class="pb" style="left:691px;top:439px;width:106px;height:16px"></div><div class="t" style="left:711px;top:441px;letter-spacing:-.1px">Rear chamber</div><div class="pb" style="left:801px;top:439px;width:101px;height:16px"></div><div class="t" style="left:817px;top:441px;letter-spacing:-.1px">Front chamber</div><div class="a" style="left:691px;top:459px;width:106px;height:136px;border:1px solid #aca899;border-right-color:#fff;border-bottom-color:#fff;box-shadow:inset -1px -1px 0 #aca899,inset 1px 1px 0 #fff"></div><div class="t" style="left:696px;top:465px;color:#0000ff;letter-spacing:-.3px">Volume:</div><div class="fld" style="left:696px;top:479px;width:66px;height:19px"></div><div class="t" style="left:700px;top:483px">100,00</div><div class="t" style="left:767px;top:487px">l</div><div class="t" style="left:697px;top:501px;color:#0000ff;letter-spacing:-.25px">Tuning freq.</div><div class="fld" style="left:696px;top:514px;width:66px;height:19px"></div><div class="t" style="left:700px;top:518px">30</div><div class="a" style="left:712px;top:519px;width:1px;height:12px;background:#000"></div><div class="t" style="left:767px;top:523px">Hz</div><div class="t" style="left:714px;top:577px">Advanced-&gt;</div><svg class="a" style="left:906px;top:442px" width="72" height="96" shape-rendering="crispEdges"><rect x="1.5" y="1.5" width="69" height="93" fill="#fff" stroke="#000" stroke-width="3"/><rect x="33" y="70" width="36" height="2" fill="#000"/><rect x="33" y="85" width="36" height="2" fill="#000"/></svg><svg class="a" style="left:906px;top:442px" width="72" height="96"><rect x="50" y="22" width="8" height="31" rx="3.5" fill="#000"/><path d="M56 29 L67 16.5 Q69 15 70 15 L70 60 Q69 60 67 58.5 L56 46 Z" fill="#000"/><path d="M64 26.5l1.5-1.5M64 37.5l1.5-1M64 48l1.5 1.5" stroke="#ddd" stroke-width="1"/></svg><div class="a" style="left:679px;top:614px;width:399px;height:4px;background:linear-gradient(#d8e0b8,#b0bf8c 50%,#76885a)"></div><div class="a" style="left:679px;top:618px;width:399px;height:3px;background:#4e4e4e"></div><div class="a" style="left:682px;top:601px;width:395px;height:13px;background:#ece9d8;border-top:1px solid #fff"></div><div class="a" style="left:683px;top:602px;width:155px;height:12px;border-top:1px solid #fff;border-left:1px solid #fff;border-bottom:1px solid #aca899;border-right:1px solid #aca899"></div><div class="t" style="left:683px;width:155px;text-align:center;top:602px;font-family:'Liberation Serif',serif;font-weight:bold;font-size:10px;line-height:14px;-webkit-text-stroke:.35px #000;letter-spacing:.1px">Parameters</div><div class="a" style="left:838px;top:603px;width:238px;height:10px;background:#0000ff"></div></body></html>
